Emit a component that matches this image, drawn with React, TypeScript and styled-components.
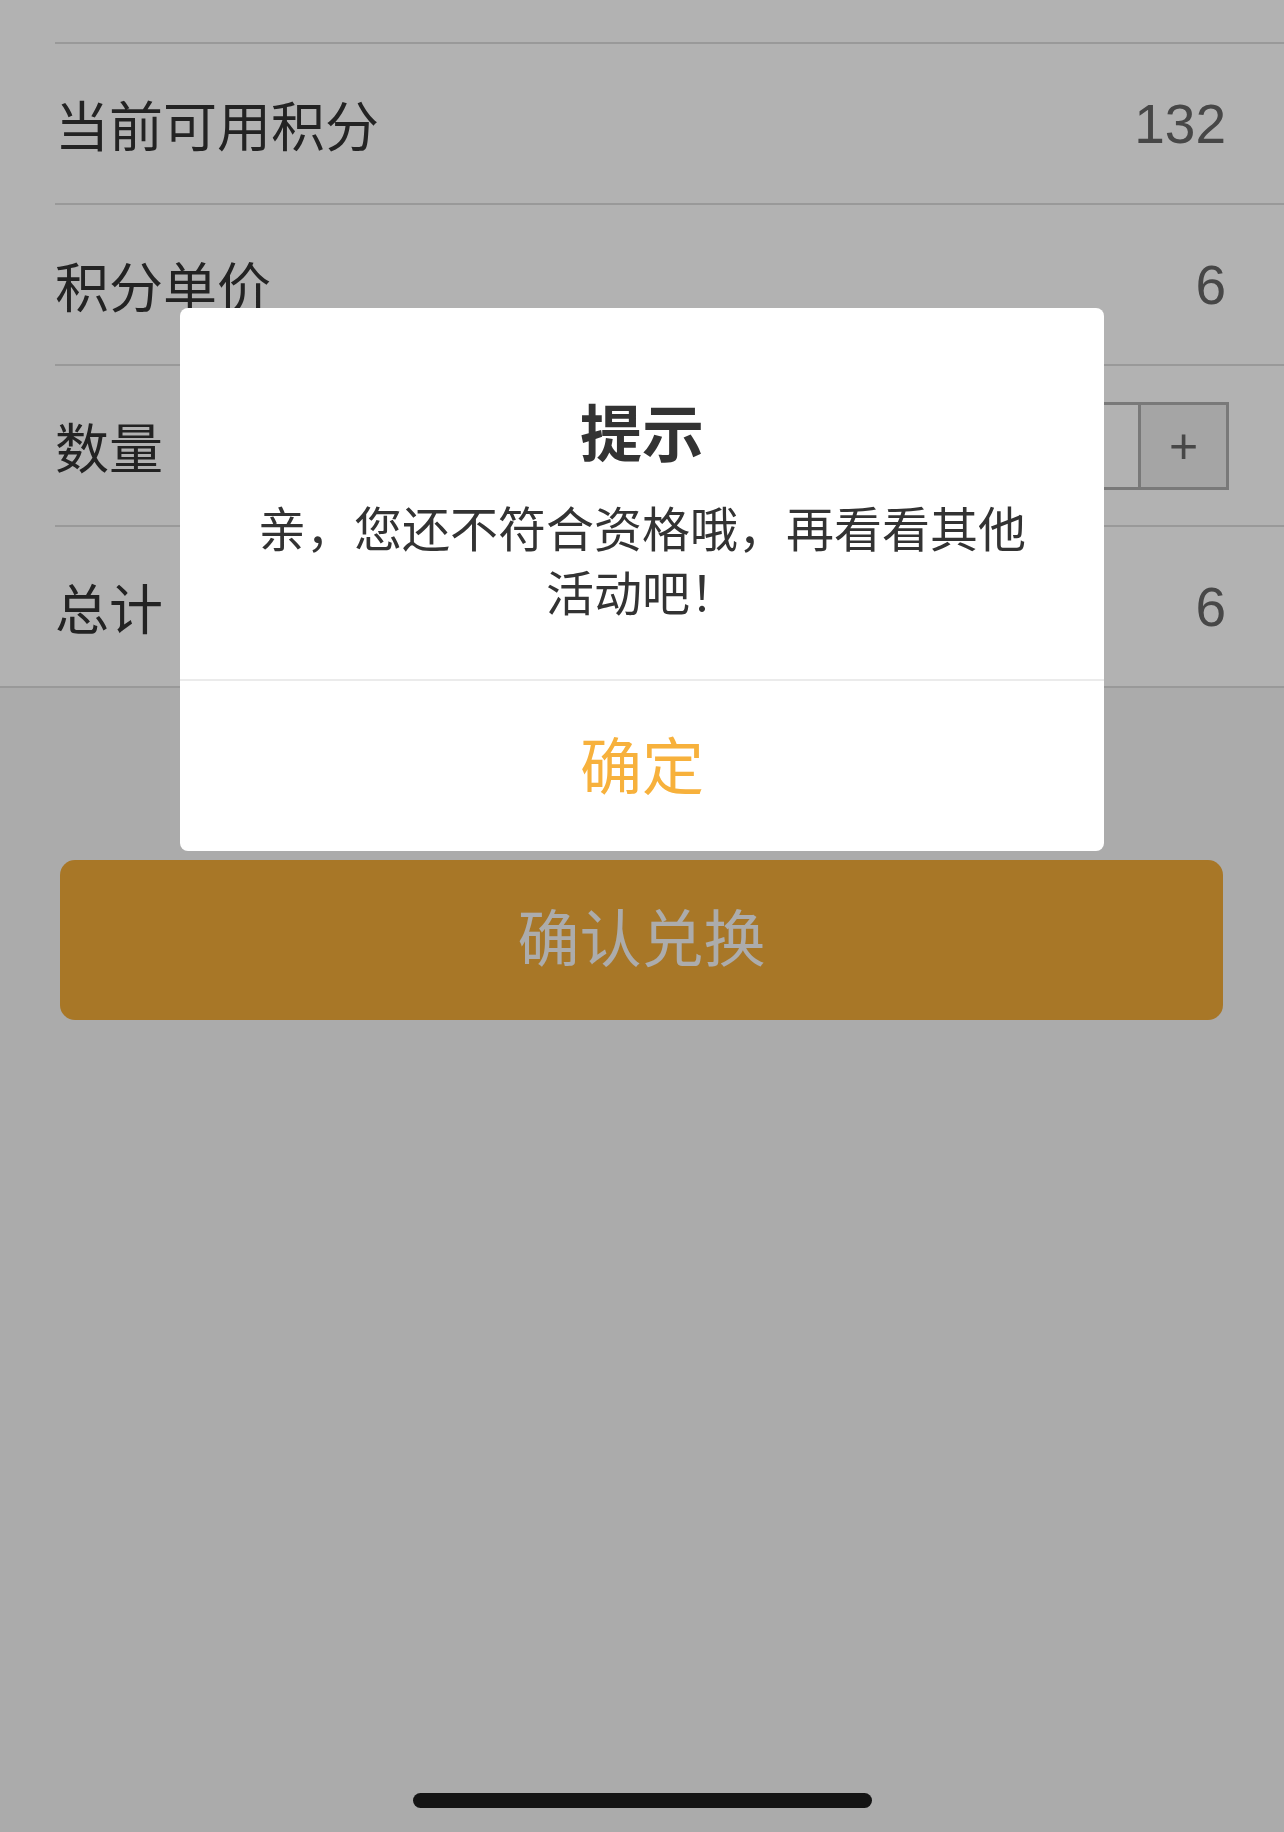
import * as React from 'react';
import styled, { createGlobalStyle } from 'styled-components';

const GlobalStyle = createGlobalStyle`
  html, body {
    margin: 0;
    padding: 0;
  }
  body {
    font-family: 'Liberation Sans', 'Noto Sans CJK SC', sans-serif;
    background: #f5f5f5;
  }
`;

type Row = {
  label: string;
  value?: string;
  stepper?: boolean;
};

const rows: Row[] = [
  { label: '当前可用积分', value: '132' },
  { label: '积分单价', value: '6' },
  { label: '数量', stepper: true },
  { label: '总计', value: '6' },
];

const App: React.FC = () => {
  return (
    <Page>
      <GlobalStyle />
      <List>
        <TopRow />
        {rows.map((row, i) => (
          <ListRow key={row.label} last={i === rows.length - 1}>
            <Label>{row.label}</Label>
            {row.stepper ? (
              <Stepper>
                <StepBtn>−</StepBtn>
                <StepInput>1</StepInput>
                <StepBtn>+</StepBtn>
              </Stepper>
            ) : (
              <Value>{row.value}</Value>
            )}
          </ListRow>
        ))}
      </List>
      <SubmitButton>确认兑换</SubmitButton>

      <Mask />
      <Dialog>
        <DialogBody>
          <DialogTitle>提示</DialogTitle>
          <DialogText>亲，您还不符合资格哦，再看看其他活动吧！</DialogText>
        </DialogBody>
        <DialogButton>确定</DialogButton>
      </Dialog>
      <HomeBar />
    </Page>
  );
};

export default App;

const Page = styled.div`
  min-height: 1832px;
  background: #f5f5f5;
  display: flex;
  flex-direction: column;
`;

const List = styled.div`
  background: #fff;
  border-bottom: 2px solid #dcdcdc;
  padding-left: 55px;
`;

const TopRow = styled.div`
  height: 42px;
  border-bottom: 2px solid #dcdcdc;
`;

const ListRow = styled.div<{ last?: boolean }>`
  height: 159px;
  display: flex;
  align-items: center;
  justify-content: space-between;
  padding-right: 55px;
  border-bottom: ${(p) => (p.last ? 'none' : '2px solid #dcdcdc')};
`;

const Label = styled.span`
  font-size: 54px;
  color: #333;
  font-family: 'Noto Sans CJK SC', sans-serif;
`;

const Value = styled.span`
  font-size: 55px;
  color: #666;
  font-family: 'Liberation Sans', 'Noto Sans CJK SC', sans-serif;
  margin-right: 3px;
`;

const Stepper = styled.div`
  display: flex;
  height: 88px;
  border: 3px solid #aeaeae;
  box-sizing: border-box;
`;

const StepBtn = styled.div`
  width: 85px;
  display: flex;
  align-items: center;
  justify-content: center;
  background: #ececec;
  color: #666;
  font-size: 50px;
  font-family: 'Liberation Sans', sans-serif;
  &:first-child {
    border-right: 3px solid #aeaeae;
  }
  &:last-child {
    border-left: 3px solid #aeaeae;
  }
`;

const StepInput = styled.div`
  width: 140px;
  display: flex;
  align-items: center;
  justify-content: center;
  background: #fff;
  color: #333;
  font-size: 48px;
`;

const SubmitButton = styled.div`
  margin: 172px 61px 0 60px;
  height: 160px;
  box-sizing: border-box;
  padding-bottom: 10px;
  border-radius: 15px;
  background: #f1ab39;
  color: #f6f6f6;
  font-size: 62px;
  font-family: 'Noto Sans CJK SC', sans-serif;
  display: flex;
  align-items: center;
  justify-content: center;
`;

const Mask = styled.div`
  position: fixed;
  inset: 0;
  background: rgba(0, 0, 0, 0.3);
`;

const Dialog = styled.div`
  position: fixed;
  top: 308px;
  left: 180px;
  width: 924px;
  background: #fff;
  border-radius: 8px;
  overflow: hidden;
  font-family: 'Noto Sans CJK SC', sans-serif;
`;

const DialogBody = styled.div`
  padding: 88px 72px 57px;
  display: flex;
  flex-direction: column;
  align-items: center;
  border-bottom: 2px solid #ebebeb;
`;

const DialogTitle = styled.div`
  font-size: 62px;
  font-weight: 700;
  color: #333;
  line-height: 68px;
`;

const DialogText = styled.div`
  margin-top: 30px;
  font-size: 48px;
  line-height: 64px;
  color: #333;
  text-align: center;
`;

const DialogButton = styled.div`
  height: 170px;
  box-sizing: border-box;
  padding-bottom: 7px;
  display: flex;
  align-items: center;
  justify-content: center;
  font-size: 62px;
  color: #f7b13c;
`;

const HomeBar = styled.div`
  position: fixed;
  left: 413px;
  bottom: 24px;
  width: 459px;
  height: 15px;
  border-radius: 8px;
  background: #141414;
`;
